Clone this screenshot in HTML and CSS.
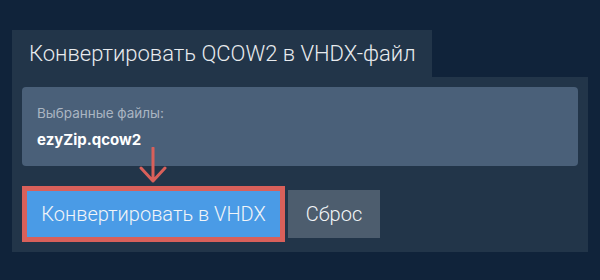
FILE: index.html
```html
<!DOCTYPE html>
<html lang="ru">
<head>
  <meta charset="UTF-8" />
  <title>Конвертировать QCOW2 в VHDX-файл</title>
  <link rel="stylesheet" href="styles.css">
</head>
<body>
  <div class="converter">
    <div class="tab">Конвертировать QCOW2 в VHDX-файл</div>
    <div class="panel">
      <div class="files">
        <div class="files-label">Выбранные файлы:</div>
        <div class="files-name">ezyZip.qcow2</div>
      </div>
      <div class="actions">
        <div class="highlight">
          <button class="btn btn-convert">Конвертировать в VHDX</button>
        </div>
        <button class="btn btn-reset">Сброс</button>
      </div>
      <!-- hint arrow pointing at the convert button -->
      <svg class="hint-arrow" width="30" height="38" viewBox="0 0 30 38">
        <path d="M15 1 V34 M3 21 L15 34 L27 21" fill="none" stroke="#d9605a" stroke-width="3" stroke-linecap="round" stroke-linejoin="round"/>
      </svg>
    </div>
  </div>
</body>
</html>
```

FILE: styles.css
```css
body {
  font-family: Roboto, 'Noto Sans', sans-serif;
  background-color: #10233a;
  color: #eee;
  margin: 0;
  padding: 0;
}
.converter {
  padding: 30px 12px 0;
}
.tab {
  display: inline-block;
  box-sizing: border-box;
  width: 420px;
  height: 47px;
  line-height: 47px;
  padding: 0 17px;
  background-color: #223549;
  color: #e8ebee;
  font-size: 22px;
  font-weight: 300;
  white-space: nowrap;
  vertical-align: top;
}
.panel {
  position: relative;
  width: 576px;
  box-sizing: border-box;
  padding: 10px;
  background-color: #223549;
}
.files {
  height: 79px;
  box-sizing: border-box;
  padding: 16px 15px 0;
  background-color: #4a6079;
  border-radius: 4px;
}
.files-label {
  font-family: Inter, sans-serif;
  font-size: 13.5px;
  color: #aab5c2;
  line-height: 20px;
}
.files-name {
  margin-top: 7px;
  font-family: Inter, sans-serif;
  font-size: 15px;
  font-weight: bold;
  color: #fff;
  line-height: 20px;
}
.actions {
  display: flex;
  align-items: flex-start;
  gap: 3px;
  margin-top: 20px;
}
.highlight {
  border: 5px solid #d9605a;
}
.btn {
  border: none;
  font-family: inherit;
  color: #f2f5f8;
  font-size: 20px;
  font-weight: 300;
  white-space: nowrap;
  cursor: pointer;
  display: block;
}
.btn-convert {
  width: 253px;
  height: 46px;
  background-color: #4a9be6;
}
.btn-reset {
  width: 92px;
  height: 48px;
  margin-top: 4px;
  background-color: #4d5d6e;
}
.hint-arrow {
  position: absolute;
  left: 126px;
  top: 70px;
}
```
